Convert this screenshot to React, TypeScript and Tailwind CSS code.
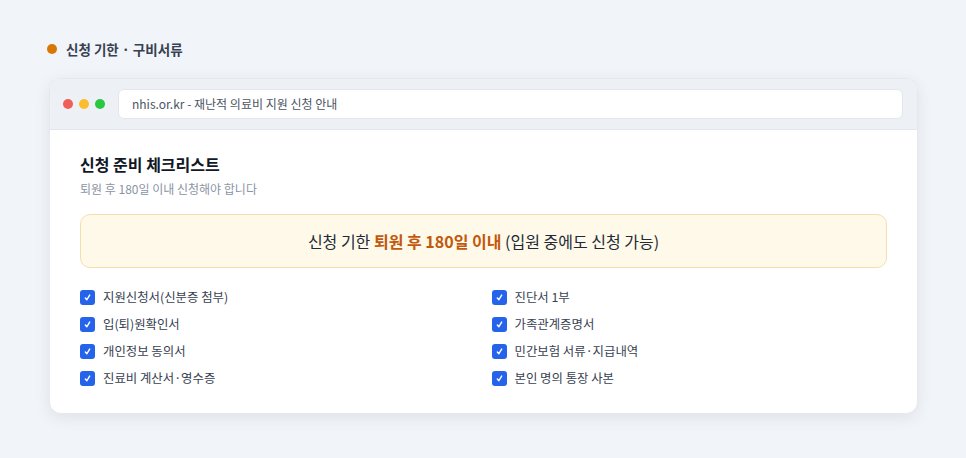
import React from 'react';

const leftItems = ['지원신청서(신분증 첨부)', '입(퇴)원확인서', '개인정보 동의서', '진료비 계산서·영수증'];
const rightItems = ['진단서 1부', '가족관계증명서', '민간보험 서류·지급내역', '본인 명의 통장 사본'];

const CheckItem = ({ label }: { label: string }) => (
  <li className="flex items-center gap-[8px] h-[27px]">
    <span className="flex items-center justify-center w-[15px] h-[15px] rounded-[3px] bg-[#2563eb] shrink-0">
      <svg width="9" height="9" viewBox="0 0 10 10" fill="none">
        <path d="M2.6 5.6 L4.3 7.5 L7.4 2.3" stroke="white" strokeWidth="1.6" strokeLinecap="round" strokeLinejoin="round" />
      </svg>
    </span>
    <span className="text-[12.4px] text-[#374151]">{label}</span>
  </li>
);

const App = () => {
  return (
    <div
      className="w-[966px] h-[458px] bg-[#f1f4f8] pt-[38px] px-[49px]"
      style={{ fontFamily: '"Noto Sans CJK KR", "Noto Sans", sans-serif' }}
    >
      <div className="flex items-center gap-[9px] h-[22px] -ml-[2px]">
        <span className="w-[10px] h-[10px] rounded-full bg-[#d97706]" />
        <span className="text-[13.5px] font-bold text-[#374151]">신청 기한 · 구비서류</span>
      </div>

      <div className="mt-[18px] w-[869px] rounded-[12px] bg-white overflow-hidden shadow-[0_4px_16px_rgba(15,23,42,0.08)] border border-[#e5e9ef]">
        <div className="flex items-center h-[51px] bg-[#edf0f4] border-b border-[#e2e6ec] pl-[13px] pr-[14px]">
          <div className="flex items-center gap-[6px]">
            <span className="w-[10px] h-[10px] rounded-full bg-[#ef5f57]" />
            <span className="w-[10px] h-[10px] rounded-full bg-[#fbbd2e]" />
            <span className="w-[10px] h-[10px] rounded-full bg-[#28c840]" />
          </div>
          <div className="ml-[13px] flex-1 h-[30px] flex items-center rounded-[6px] bg-white border border-[#e2e6ec] px-[13px] text-[12px] text-[#4b5563]">
            nhis.or.kr - 재난적 의료비 지원 신청 안내
          </div>
        </div>

        <div className="px-[30px] pt-[22px] pb-[21px]">
          <h2 className="text-[16px] font-bold text-[#111827] leading-[24px]">신청 준비 체크리스트</h2>
          <p className="mt-[4px] text-[12px] text-[#8a94a6] leading-[18px]">퇴원 후 180일 이내 신청해야 합니다</p>

          <div className="mt-[16px] h-[54px] flex items-center justify-center rounded-[10px] bg-[#fef9e9] border border-[#f4deb0] text-[16px] text-[#1f2937]">
            <span>
              신청 기한 <b className="font-bold text-[#c2580c]">퇴원 후 180일 이내</b> (입원 중에도 신청 가능)
            </span>
          </div>

          <div className="mt-[16px] grid grid-cols-2 gap-x-[16px]">
            <ul>
              {leftItems.map((item) => (
                <CheckItem key={item} label={item} />
              ))}
            </ul>
            <ul>
              {rightItems.map((item) => (
                <CheckItem key={item} label={item} />
              ))}
            </ul>
          </div>
        </div>
      </div>
    </div>
  );
};

export default App;
